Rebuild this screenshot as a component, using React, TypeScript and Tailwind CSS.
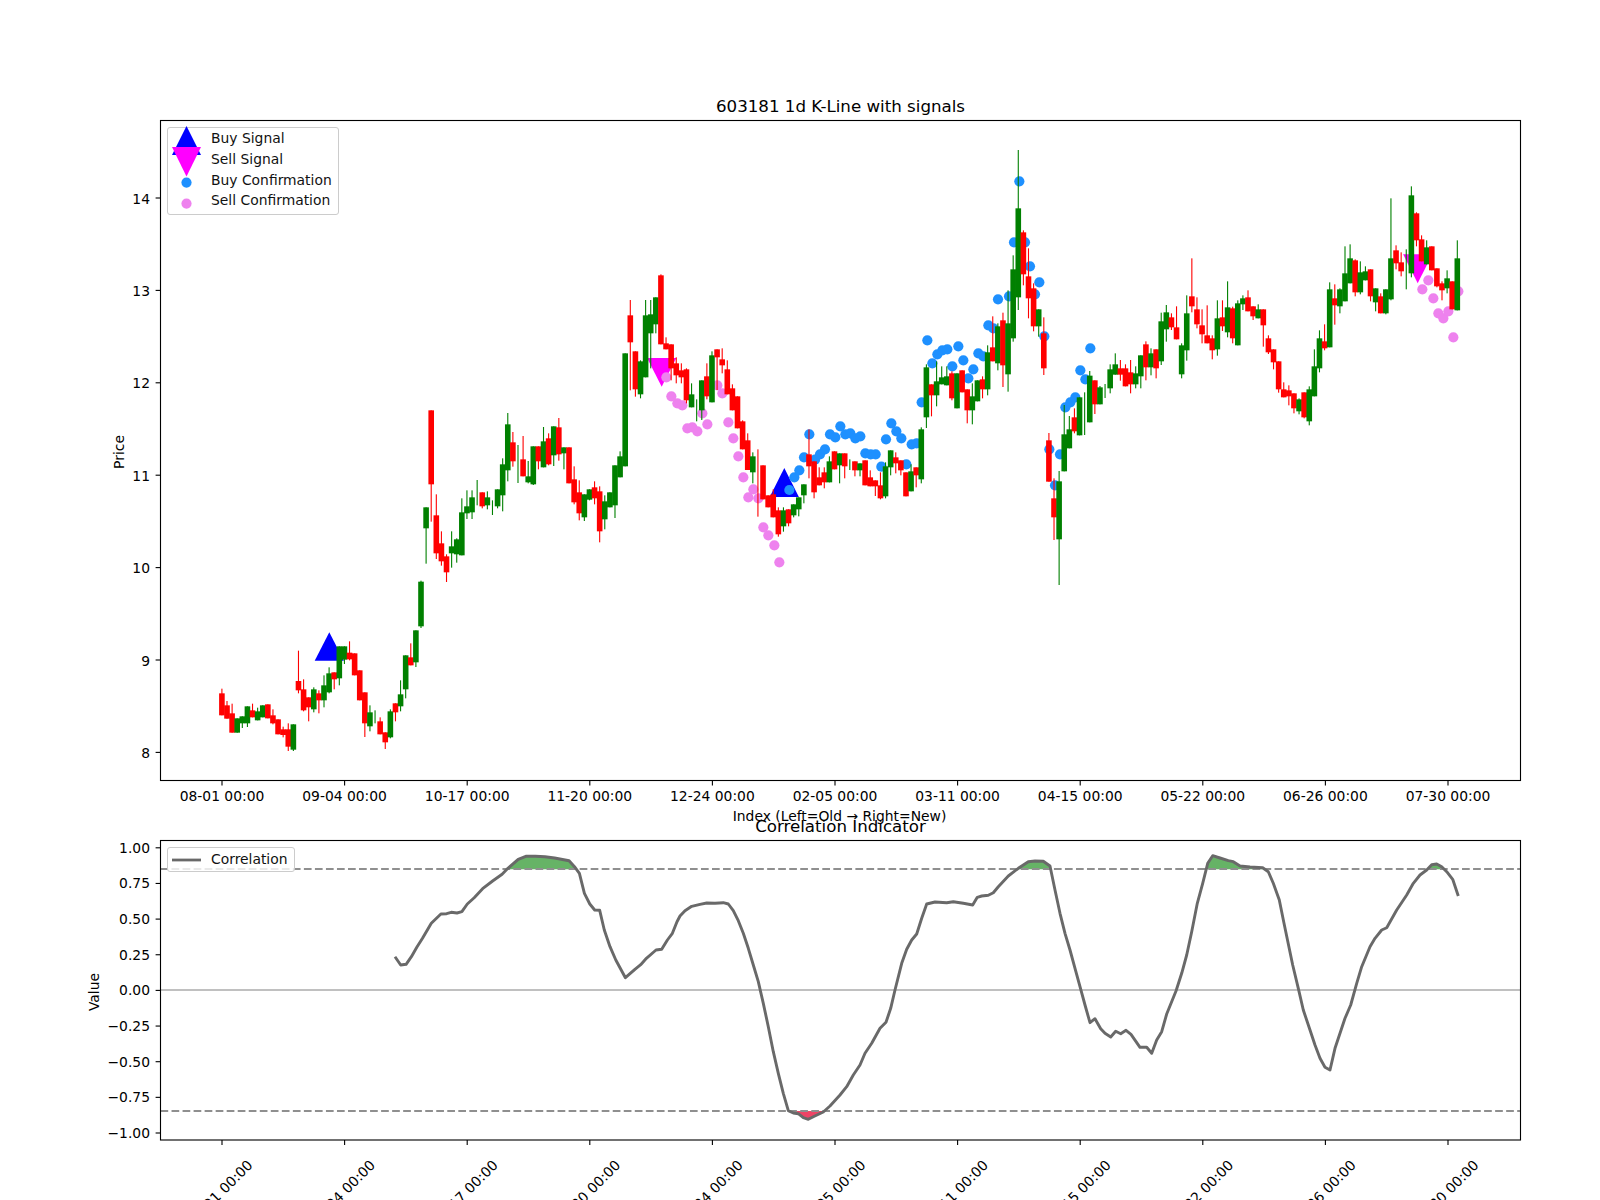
import React from "react";

type Bar = [string, number, number, number, number];

// candles as [colour, bodyTop, bodyBottom, wickTop, wickBottom], measured in sections
const S1: Bar[] = [
["r",280,346,266,346],["r",316,356,303,356],["r",340,398,311,398],["g",355,398,355,398],["g",349,370,349,384],["g",319,370,319,381],["r",331,352,311,352],["g",334,361,323,361],["g",316,352,316,352],["r",313,355,313,355],
["r",346,370,328,373],["r",358,403,358,403],["r",388,405,380,412],["r",388,440,370,453],["g",373,449,373,453],["r",243,271,152,280],["r",268,331,238,334],["r",292,322,292,364],["g",268,328,262,337],["r",280,301,271,340],
["g",256,301,226,322],["g",220,277,202,280],["r",217,238,217,268],["g",139,235,139,256],["g",139,179,139,192],["r",158,178,124,181],["r",160,226,160,226],["r",211,301,211,301],["r",277,370,277,411],["g",337,379,316,394],
["g",350,350,331,370],["r",364,403,352,403],["r",397,427,397,447],["g",334,412,328,415],["r",310,337,310,364],["g",283,319,241,334],["g",166,268,166,295],["r",172,196,130,196],["g",91,187,91,201],["g",-55,79,-58,84],
];
const S2: Bar[] = [
["g",412,475,412,581],["r",121,343,121,455],["r",436,550,373,567],["r",520,574,484,587],["r",559,607,553,636],["g",529,550,484,593],["g",508,553,505,578],["g",427,556,385,556],["g",409,430,361,447],["g",382,427,361,447],
["g",370,370,330,406],["r",367,409,367,415],["g",382,406,364,418],["g",410,410,391,435],["g",358,409,358,415],["g",283,376,265,424],["g",163,301,129,334],["r",217,274,186,290],["g",280,280,225,339],["r",268,319,198,319],
["g",319,337,273,340],["g",229,343,229,345],["r",229,274,229,298],["g",214,292,171,292],["r",205,283,190,286],["g",169,256,169,288],["r",172,253,144,272],["g",232,250,232,298],["r",232,340,232,340],["r",328,397,289,403],
["r",367,430,331,451],["g",373,442,373,453],["g",358,389,358,391],["r",352,385,334,403],["r",364,484,349,517],["g",394,448,376,478],["g",367,412,367,412],["g",286,406,286,444],["g",259,322,244,322],
];
const S3: Bar[] = [
["g",310,649,310,649],["r",196,277,150,421],["r",304,418,304,440],["g",334,433,331,445],["g",196,382,150,382],["g",193,250,150,355],["g",142,223,142,250],["r",76,283,73,283],["r",280,298,262,298],["r",283,355,283,391],
["r",340,376,322,400],["r",361,382,340,400],["r",358,451,355,460],["g",433,472,400,472],["g",480,480,448,514],["g",391,481,391,510],["r",379,439,340,448],["g",316,457,304,457],["r",298,322,298,420],["r",328,346,295,370],
["r",358,433,331,433],["r",415,481,403,481],["r",439,535,439,535],["r",514,598,511,598],["r",571,660,550,660],["g",619,667,607,700],["r",700,700,598,800],["r",646,748,646,748],["r",736,772,736,772],["r",733,802,718,802],
["r",781,853,772,860],["g",781,829,772,845],["r",778,820,778,829],["g",763,796,763,802],["g",742,778,742,799],["g",703,736,703,760],["r",613,649,538,685],["r",634,727,634,745],["r",682,706,652,706],["r",667,697,652,715],
["g",634,697,619,697],["r",604,658,604,658],["g",610,646,610,700],["r",610,649,610,685],["g",645,645,628,660],["r",634,661,634,679],["g",640,661,640,679],["r",631,706,631,706],["r",682,709,661,709],["r",691,709,691,738],
["r",706,745,667,748],["g",649,739,637,745],["g",601,652,601,676],["r",622,640,607,670],["r",631,661,631,676],["r",667,739,667,739],["g",664,724,643,724],["r",652,676,652,712],["g",538,688,532,700],["g",352,502,343,534],
["r",403,436,403,499],["g",394,436,334,469],["g",382,403,349,403],["g",379,406,349,406],["r",370,445,364,451],["g",370,475,370,475],["r",361,427,361,427],["r",418,481,418,520],["g",439,481,400,523],["g",391,454,391,454],
["r",388,418,379,445],["g",307,418,286,436],["r",292,334,199,334],["g",229,340,220,361],
];
const S4: Bar[] = [
["r",571,706,548,771],["g",580,733,481,785],["g",418,625,376,635],["g",235,502,60,540],["r",307,433,301,466],["r",439,505,355,565],["r",475,589,460,604],["g",538,589,538,620],["r",610,715,562,735],["r",931,1055,909,1055],
["r",1105,1162,1045,1230],["g",1054,1228,1023,1365],["g",913,1024,825,1024],["g",898,955,858,955],["r",862,904,835,910],["g",802,916,802,916],["g",850,850,787,915],["g",737,877,723,877],["r",751,823,751,852],["g",772,823,768,823],
["g",780,780,762,804],["g",718,775,703,790],["g",703,734,670,734],["r",715,734,690,752],["r",715,769,703,769],["r",727,763,690,790],["g",730,763,709,775],["g",676,739,676,775],["r",643,712,634,751],["g",670,712,655,736],
["r",658,715,658,745],["g",574,694,548,705],["g",547,598,525,635],["r",562,592,550,600],["r",592,628,529,628],["g",646,733,640,745],["g",550,661,496,692],["r",499,529,385,547],["r",538,583,502,595],["r",586,613,538,640],
["r",616,640,526,640],["r",625,661,616,688],["g",565,658,511,677],["r",562,589,511,603],["g",532,607,454,622],["r",535,625,530,640],["g",520,646,511,646],
];
const S5: Bar[] = [
["g",385,403,376,420],["r",382,424,361,424],["r",409,439,409,450],["g",418,445,403,445],["r",418,466,418,530],["r",505,547,496,552],["r",538,577,538,598],["r",574,658,574,668],["r",658,682,637,682],["r",661,679,646,706],
["r",670,715,670,730],["g",688,724,685,733],["r",667,742,667,745],["g",658,754,649,766],["g",589,679,538,679],["g",505,595,481,607],["r",514,535,463,541],["g",358,532,337,532],["r",385,406,343,464],["g",358,409,355,430],
["g",310,394,229,394],["g",265,340,223,340],["r",271,367,268,379],["g",307,367,274,373],["g",304,331,289,331],["r",298,379,298,394],["g",355,397,355,424],["r",379,430,370,430],["g",358,430,358,433],["g",265,388,85,391],
["r",241,280,226,298],["r",277,304,247,319],["g",300,300,238,358],["g",76,310,49,322],["r",130,211,127,229],["r",208,274,196,274],["g",232,283,211,283],["r",229,301,229,301],["r",295,349,295,352],["r",340,361,334,391],
["g",325,355,301,370],["r",334,418,334,418],["g",265,421,211,421],
];

const toReal = (rows: Bar[], y0: number): Bar[] =>
  rows.map(([c, a, b, d, e]) => [c, y0 + a / 3, y0 + b / 3, y0 + d / 3, y0 + e / 3] as Bar);
const BARS: Bar[] = [...toReal(S1, 600), ...toReal(S2, 370), ...toReal(S3, 250), ...toReal(S4, 130), ...toReal(S5, 170)];
const barX = (i: number) => 221.9 + 5.105 * i;

const BLUE_Z3: [number, number][] = [[628,553],[583,682],[598,661],[612,622],[645,629],[660,613],[675,598],[690,553],[706,562],[721,529],[736,553],[751,550],[766,565],[781,559],[796,610],[812,613],[827,613],[844,650],[858,568],[874,520],[889,544],[904,565],[919,643],[935,583],[950,580],[965,457],[982,271],[997,340],[1012,313],[1027,301],[1042,298],[1057,349],[1075,289],[1090,331],[1105,385],[1120,358],[1135,310],[1150,319],[1165,226],[1180,235],[568,720]];
const BLUE_Z4: [number, number][] = [[58,154],[42,337],[75,337],[90,409],[118,457],[105,493],[-6,508],[27,499],[133,619],[148,958],[180,973],[165,1066],[196,832],[211,817],[226,802],[256,748],[241,721],[271,655]];
const PINK_Z3: [number, number][] = [[199,382],[214,439],[232,460],[247,466],[262,535],[277,532],[292,544],[307,490],[322,523],[352,406],[367,430],[385,517],[400,565],[415,619],[430,682],[445,742],[460,718],[475,745],[490,832],[505,856],[523,886],[538,937]];
const PINK_Z5: [number, number][] = [[547,358],[565,331],[580,385],[595,430],[610,445],[625,424],[640,502],[655,364]];
const BLUE = [...BLUE_Z3.map(([x, y]) => [600 + x / 3, 250 + y / 3]), ...BLUE_Z4.map(([x, y]) => [1000 + x / 3, 130 + y / 3])];
const PINK = [...PINK_Z3.map(([x, y]) => [600 + x / 3, 250 + y / 3]), ...PINK_Z5.map(([x, y]) => [1240 + x / 3, 170 + y / 3])];

const L7 = [[823,500],[838,525],[852,523],[866,500],[880,472],[895,445],[918,400],[943,372],[958,371],[970,367],[985,369],[998,365],[1012,342],[1030,323],[1052,296],[1078,273],[1103,253],[1118,235],[1145,208],[1165,199],[1190,199],[1215,200],[1240,204],[1278,212],[1292,230],[1305,250],[1318,310],[1332,342],[1345,360],[1358,361],[1370,420],[1385,470],[1400,510],[1425,563],[1450,538],[1465,524],[1480,505],[1505,480],[1520,478],[1535,450],[1548,430],[1560,395]];
const L8 = [[0,378],[15,362],[35,349],[60,343],[80,339],[105,340],[130,338],[145,342],[160,362],[175,392],[190,430],[205,475],[220,525],[235,575],[250,640],[265,710],[280,785],[295,850],[310,910],[325,962],[340,969],[355,971],[370,983],[385,988],[400,980],[430,966],[450,948],[480,915],[500,890],[520,855],[540,825],[555,790],[575,760],[600,715],[618,697],[632,655],[645,600],[665,520],[680,478],[695,450],[710,432],[725,385],[740,342],[765,336],[800,338],[820,335],[850,340],[878,345],[892,322],[905,318],[925,316],[940,308],[955,290],[985,258],[1015,235],[1045,215],[1065,213],[1090,214],[1110,228],[1125,300],[1140,370],[1155,430],[1170,480],[1185,535],[1200,590],[1215,645],[1230,698],[1245,686],[1262,716],[1275,730],[1292,741],[1307,724],[1322,731],[1338,721],[1353,733]];
const L9 = [[0,772],[20,772],[35,790],[50,750],[65,725],[80,672],[108,603],[125,550],[140,495],[155,425],[172,340],[188,280],[203,220],[218,197],[240,204],[265,212],[280,215],[300,228],[330,231],[368,233],[385,245],[400,280],[418,330],[432,400],[458,525],[475,595],[490,660],[510,720],[525,765],[540,805],[555,832],[570,840],[585,775],[600,730],[615,685],[632,645],[650,580],[665,530],[690,470],[705,445],[725,420],[740,413],[770,360],[800,315],[820,280],[840,255],[860,240],[875,224],[890,222],[905,230],[920,245],[938,268],[955,318]];
const LINE = [
  ...L7.map(([x, y]) => [80 + x / 2.613, 790 + y / 3]),
  ...L8.map(([x, y]) => [680 + x / 3, 790 + y / 3]),
  ...L9.map(([x, y]) => [1140 + x / 3, 790 + y / 3]),
];
const linePts = LINE.map((p) => `${p[0].toFixed(1)},${p[1].toFixed(1)}`).join(" ");
const startX = LINE[0][0].toFixed(1);
const endX = LINE[LINE.length - 1][0].toFixed(1);

const TICKS = [
  ["08-01 00:00", 222], ["09-04 00:00", 344.6], ["10-17 00:00", 467.2], ["11-20 00:00", 589.8],
  ["12-24 00:00", 712.4], ["02-05 00:00", 835], ["03-11 00:00", 957.6], ["04-15 00:00", 1080.2],
  ["05-22 00:00", 1202.8], ["06-26 00:00", 1325.4], ["07-30 00:00", 1448],
] as [string, number][];
const PRICE = [14, 13, 12, 11, 10, 9, 8];
const VALUES = ["1.00", "0.75", "0.50", "0.25", "0.00", "−0.25", "−0.50", "−0.75", "−1.00"];

function Tri({ cx, base, apex }: { cx: number; base: number; apex: number }) {
  return <polygon points={`${cx - 14.6},${base} ${cx + 14.6},${base} ${cx},${apex}`} />;
}

function PriceChart() {
  return (
    <svg viewBox="160 120 1361 661" className="block w-[1361px] h-[661px] overflow-visible">
      <g className="fill-[#0000ff]">
        <Tri cx={329.3} base={660.7} apex={632.3} />
        <Tri cx={784.3} base={497} apex={468} />
      </g>
      <g className="fill-[#ff00ff]">
        <Tri cx={661.7} base={358} apex={386.7} />
        <Tri cx={1417.7} base={254.3} apex={283.3} />
      </g>
      <g className="fill-[#1e90ff]">
        {BLUE.map((p, i) => <circle key={i} cx={p[0]} cy={p[1]} r={5.1} />)}
      </g>
      <g className="fill-[#ee82ee]">
        {PINK.map((p, i) => <circle key={i} cx={p[0]} cy={p[1]} r={5.1} />)}
      </g>
      {BARS.map(([c, bt, bb, wt, wb], i) => {
        const x = barX(i);
        const col = c === "r" ? "#ff0000" : "#008000";
        return (
          <g key={i} fill={col}>
            <rect x={x - 0.55} y={wt} width={1.1} height={Math.max(wb - wt, 0)} />
            {bb > bt && <rect x={x - 2.8} y={bt} width={5.6} height={bb - bt} />}
          </g>
        );
      })}
      <rect x={160.5} y={120.5} width={1360} height={660} fill="none" stroke="#000" strokeWidth={1.11} />
      {TICKS.map(([t, x]) => (
        <g key={t}>
          <line x1={x} x2={x} y1={780.5} y2={785.4} stroke="#000" strokeWidth={1.11} />
          <text x={x} y={801} textAnchor="middle" className="text-[13.89px] fill-black">{t}</text>
        </g>
      ))}
      {PRICE.map((p, i) => {
        const y = 198 + i * 92.4;
        return (
          <g key={p}>
            <line x1={155.6} x2={160.5} y1={y} y2={y} stroke="#000" strokeWidth={1.11} />
            <text x={150} y={y + 5.5} textAnchor="end" className="text-[13.89px] fill-black">{p}</text>
          </g>
        );
      })}
      <text transform="translate(124 452) rotate(-90)" textAnchor="middle" className="text-[13.89px] fill-black">Price</text>
    </svg>
  );
}

function CorrelationChart() {
  return (
    <svg viewBox="160 840 1361 301" className="block w-[1361px] h-[301px] overflow-visible">
      <defs>
        <clipPath id="above"><rect x={160} y={800} width={1361} height={69.3} /></clipPath>
        <clipPath id="below"><rect x={160} y={1111} width={1361} height={29} /></clipPath>
      </defs>
      <polygon clipPath="url(#above)" points={`${linePts} ${endX},1200 ${startX},1200`} className="fill-[#66b366]" />
      <polygon clipPath="url(#below)" points={`${linePts} ${endX},700 ${startX},700`} className="fill-[#ee4466]" />
      <line x1={160.5} x2={1520.5} y1={990} y2={990} stroke="#ababab" strokeWidth={1.7} />
      <line x1={160.5} x2={1520.5} y1={869} y2={869} stroke="#8f8f8f" strokeWidth={2.08} strokeDasharray="7.7 3.33" />
      <line x1={160.5} x2={1520.5} y1={1111} y2={1111} stroke="#8f8f8f" strokeWidth={2.08} strokeDasharray="7.7 3.33" />
      <polyline points={linePts} fill="none" stroke="#696969" strokeWidth={2.9} strokeLinejoin="round" />
      <rect x={160.5} y={840.5} width={1360} height={299.5} fill="none" stroke="#000" strokeWidth={1.11} />
      {TICKS.map(([t, x]) => (
        <g key={t}>
          <line x1={x} x2={x} y1={1140} y2={1145} stroke="#000" strokeWidth={1.11} />
          <text transform={`translate(${x + 1.5} 1196) rotate(-45)`} textAnchor="middle" className="text-[13.89px] fill-black">{t}</text>
        </g>
      ))}
      {VALUES.map((v, i) => {
        const y = 847.8 + i * 35.65;
        return (
          <g key={v}>
            <line x1={155.6} x2={160.5} y1={y} y2={y} stroke="#000" strokeWidth={1.11} />
            <text x={150} y={y + 5} textAnchor="end" className="text-[13.89px] fill-black">{v}</text>
          </g>
        );
      })}
      <text transform="translate(99 992) rotate(-90)" textAnchor="middle" className="text-[13.89px] fill-black">Value</text>
    </svg>
  );
}

function LegendRow({ marker, label }: { marker: React.ReactNode; label: string }) {
  return (
    <div className="flex items-center h-[20.8px]">
      <svg viewBox="0 0 43 20" className="w-[43px] h-[20px] shrink-0 overflow-visible">{marker}</svg>
      <span className="text-[13.89px] leading-none whitespace-nowrap text-[#111]">{label}</span>
    </div>
  );
}

export default function App() {
  return (
    <div className="w-[1600px] h-[1200px] overflow-hidden bg-white font-['DejaVu_Sans',sans-serif] text-black pl-[160px]">
      <div className="w-[1361px]">
        <div className="h-[120px] flex items-end justify-center pb-[3px] text-[16.67px] leading-[20px]">
          603181 1d K-Line with signals
        </div>
        <div className="relative">
          <PriceChart />
          <div className="absolute left-[7px] top-[7px] w-[171.5px] h-[88px] pt-[0.5px] rounded-[3px] border border-[#cccccc] bg-white/80 flex flex-col">
            <LegendRow label="Buy Signal" marker={<polygon points="4,26 33,26 18.5,-3" className="fill-[#0000ff]" />} />
            <LegendRow label="Sell Signal" marker={<polygon points="4,-3 33,-3 18.5,26.5" className="fill-[#ff00ff]" />} />
            <LegendRow label="Buy Confirmation" marker={<circle cx="18.5" cy="12.6" r="5.1" className="fill-[#1e90ff]" />} />
            <LegendRow label="Sell Confirmation" marker={<circle cx="18.5" cy="12.6" r="5.1" className="fill-[#ee82ee]" />} />
          </div>
        </div>
        <div className="grid h-[59px] justify-items-center">
          <div className="[grid-area:1/1] mt-[27px] -translate-x-[1px] text-[13.89px] leading-[16px]">Index (Left=Old → Right=New)</div>
          <div className="[grid-area:1/1] mt-[36px] text-[16.67px] leading-[20px]">Correlation Indicator</div>
        </div>
        <div className="relative">
          <CorrelationChart />
          <div className="absolute left-[7px] top-[7px] w-[127.5px] h-[25px] rounded-[3px] border border-[#cccccc] bg-white/80 flex items-center">
            <svg viewBox="0 0 43 20" className="w-[43px] h-[20px] shrink-0">
              <line x1="4" x2="33" y1="10" y2="10" stroke="#696969" strokeWidth="2.78" />
            </svg>
            <span className="text-[13.89px] leading-none text-[#111]">Correlation</span>
          </div>
        </div>
      </div>
    </div>
  );
}
